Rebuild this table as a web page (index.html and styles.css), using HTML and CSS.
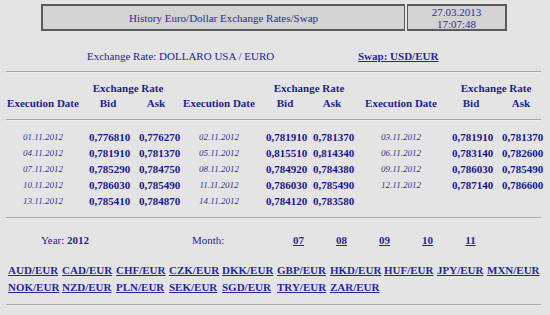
FILE: index.html
```html
<!DOCTYPE html>
<html>
<head>
<meta charset="utf-8">
<link rel="stylesheet" href="styles.css">
</head>
<body>
<div class="top">
  <div class="box title-box">History Euro/Dollar Exchange Rates/Swap</div>
  <div class="box date-box"><span>27.03.2013</span><span>17:07:48</span></div>
</div>
<div class="rate-line">
  <span>Exchange Rate: DOLLARO USA / EURO</span>
  <a href="#" class="swap">Swap: USD/EUR</a>
</div>
<div class="rule"></div>
<div class="grid head">
  <span></span><span class="er">Exchange Rate</span>
  <span></span><span class="er">Exchange Rate</span>
  <span></span><span class="er">Exchange Rate</span>
  <span>Execution Date</span><span>Bid</span><span>Ask</span>
  <span>Execution Date</span><span>Bid</span><span>Ask</span>
  <span>Execution Date</span><span>Bid</span><span>Ask</span>
</div>
<div class="rule"></div>
<div class="grid data">
  <span class="d">01.11.2012</span><span class="v">0,776810</span><span class="v">0,776270</span>
  <span class="d">02.11.2012</span><span class="v">0,781910</span><span class="v">0,781370</span>
  <span class="d">03.11.2012</span><span class="v">0,781910</span><span class="v">0,781370</span>
  <span class="d">04.11.2012</span><span class="v">0,781910</span><span class="v">0,781370</span>
  <span class="d">05.11.2012</span><span class="v">0,815510</span><span class="v">0,814340</span>
  <span class="d">06.11.2012</span><span class="v">0,783140</span><span class="v">0,782600</span>
  <span class="d">07.11.2012</span><span class="v">0,785290</span><span class="v">0,784750</span>
  <span class="d">08.11.2012</span><span class="v">0,784920</span><span class="v">0,784380</span>
  <span class="d">09.11.2012</span><span class="v">0,786030</span><span class="v">0,785490</span>
  <span class="d">10.11.2012</span><span class="v">0,786030</span><span class="v">0,785490</span>
  <span class="d">11.11.2012</span><span class="v">0,786030</span><span class="v">0,785490</span>
  <span class="d">12.11.2012</span><span class="v">0,787140</span><span class="v">0,786600</span>
  <span class="d">13.11.2012</span><span class="v">0,785410</span><span class="v">0,784870</span>
  <span class="d">14.11.2012</span><span class="v">0,784120</span><span class="v">0,783580</span>
  <span></span><span></span><span></span>
</div>
<div class="rule"></div>
<div class="year-row">
  <span>Year: <b>2012</b></span>
  <span>Month:</span>
  <a href="#">07</a><a href="#">08</a><a href="#">09</a><a href="#">10</a><a href="#">11</a>
</div>
<div class="cur">
  <a href="#">AUD/EUR</a><a href="#">CAD/EUR</a><a href="#">CHF/EUR</a><a href="#">CZK/EUR</a><a href="#">DKK/EUR</a><a href="#">GBP/EUR</a><a href="#">HKD/EUR</a><a href="#">HUF/EUR</a><a href="#">JPY/EUR</a><a href="#">MXN/EUR</a>
  <a href="#">NOK/EUR</a><a href="#">NZD/EUR</a><a href="#">PLN/EUR</a><a href="#">SEK/EUR</a><a href="#">SGD/EUR</a><a href="#">TRY/EUR</a><a href="#">ZAR/EUR</a>
</div>
<div class="rule last"></div>
</body>
</html>
```
FILE: styles.css
```css
html, body {
  margin: 0;
  padding: 0;
  background: #e4e4e4;
}
body {
  font-family: "Liberation Serif", "Times New Roman", serif;
  font-size: 11px;
  color: #1f1f92;
  width: 550px;
  height: 315px;
  overflow: hidden;
}
a {
  color: #2626a4;
  font-weight: bold;
  text-decoration: underline;
}
.top {
  display: flex;
  gap: 2px;
  margin-left: 41px;
  padding-top: 4px;
}
.box {
  box-sizing: border-box;
  height: 27px;
  background: #d3d3d3;
  border: 2px solid #5a5a5a;
  color: #2a2aa2;
  font-size: 11px;
}
.title-box {
  width: 364px;
  display: flex;
  align-items: center;
  justify-content: center;
  border-right-width: 1px;
}
.date-box {
  width: 100px;
  display: flex;
  flex-direction: column;
  align-items: center;
  justify-content: center;
  line-height: 12px;
  border-left-width: 1px;
}
.rate-line {
  display: grid;
  grid-template-columns: 271px auto;
  padding-left: 87px;
  margin-top: 18px;
  line-height: 14px;
}
.rule {
  margin: 8px 9px 0 6px;
  border-top: 1px solid #a6a6a6;
  border-bottom: 1px solid #ececec;
}
.grid {
  display: grid;
  grid-template-columns: 74px 56px 40px 86px 46px 48px 90px 50px 50px;
  margin-left: 6px;
  text-align: center;
  white-space: nowrap;
}
.head {
  margin-top: 8px;
  font-weight: bold;
  line-height: 15px;
}
.head .er {
  grid-column: span 2;
}
.data {
  margin-top: 8px;
  grid-auto-rows: 16px;
  line-height: 16px;
}
.d {
  font-style: italic;
  font-size: 9px;
  color: #33339a;
}
.v {
  font-weight: bold;
  color: #17178a;
  padding-left: 3px;
}
.year-row {
  display: grid;
  grid-template-columns: 151px 85px repeat(5, 43px);
  padding-left: 41px;
  margin-top: 14px;
  line-height: 14px;
}
.year-row a {
  text-align: center;
}
.year-row b {
  font-weight: bold;
}
.cur {
  display: grid;
  grid-template-columns: 54px 54px 53px 53px 55px 53px 54px 53px 50px auto;
  margin-left: 8px;
  margin-top: 15px;
  line-height: 17px;
  white-space: nowrap;
}
.rule.last {
  margin-top: 8px;
}
```
